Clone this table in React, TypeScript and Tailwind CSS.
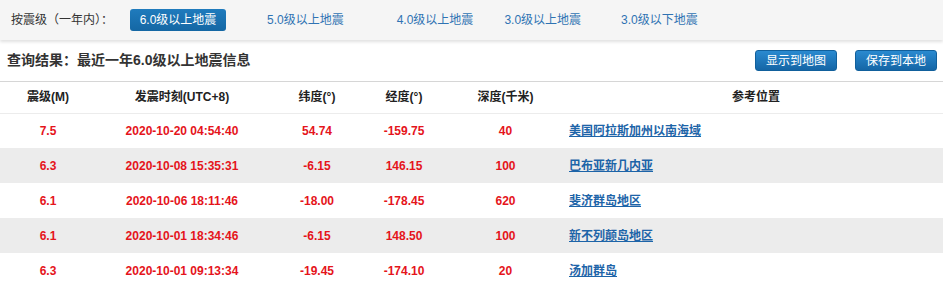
import React from 'react';

interface Quake {
  mag: string;
  time: string;
  lat: string;
  lon: string;
  depth: string;
  place: string;
}

const quakes: Quake[] = [
  { mag: '7.5', time: '2020-10-20 04:54:40', lat: '54.74', lon: '-159.75', depth: '40', place: '美国阿拉斯加州以南海域' },
  { mag: '6.3', time: '2020-10-08 15:35:31', lat: '-6.15', lon: '146.15', depth: '100', place: '巴布亚新几内亚' },
  { mag: '6.1', time: '2020-10-06 18:11:46', lat: '-18.00', lon: '-178.45', depth: '620', place: '斐济群岛地区' },
  { mag: '6.1', time: '2020-10-01 18:34:46', lat: '-6.15', lon: '148.50', depth: '100', place: '新不列颠岛地区' },
  { mag: '6.3', time: '2020-10-01 09:13:34', lat: '-19.45', lon: '-174.10', depth: '20', place: '汤加群岛' },
];

const tabs = [
  { label: '5.0级以上地震', cls: 'ml-[41px]' },
  { label: '4.0级以上地震', cls: 'ml-[53px]' },
  { label: '3.0级以上地震', cls: 'ml-[31px]' },
  { label: '3.0级以下地震', cls: 'ml-[40px]' },
];

function BlueButton({ children }: { children: React.ReactNode }) {
  return (
    <button className="h-[21px] w-[82px] rounded-[3px] border border-[#11609c] bg-gradient-to-b from-[#2a8ad0] to-[#1566a6] text-[12px] leading-none text-white">
      {children}
    </button>
  );
}

export default function App() {
  return (
    <div
      className="h-[287px] w-[943px] overflow-hidden bg-white text-[#333]"
      style={{ fontFamily: '"Liberation Sans", "Noto Sans CJK SC", sans-serif' }}
    >
      {/* magnitude filter */}
      <div className="relative z-10 flex h-[40px] items-center bg-[#f5f5f5] pl-[11px] shadow-[0_2px_3px_rgba(0,0,0,0.12)]">
        <span className="w-[119px] text-[12px]">按震级（一年内）：</span>
        <span className="flex h-[22px] w-[96px] items-center justify-center rounded-[3px] bg-gradient-to-b from-[#1f7bbd] to-[#1467a4] text-[12px] text-white">
          6.0级以上地震
        </span>
        {tabs.map((t) => (
          <span key={t.label} className={`${t.cls} text-[12px] text-[#2f73b3]`}>
            {t.label}
          </span>
        ))}
      </div>

      {/* result heading */}
      <div className="flex h-[42px] items-center justify-between border-b border-[#d6d6d6] pr-[6px] pl-[7px]">
        <span className="text-[14px] font-bold text-[#333]">查询结果：最近一年6.0级以上地震信息</span>
        <div className="flex gap-[18px]">
          <BlueButton>显示到地图</BlueButton>
          <BlueButton>保存到本地</BlueButton>
        </div>
      </div>

      <table className="w-full table-fixed border-collapse text-[12px]">
        <colgroup>
          <col className="w-[96px]" />
          <col className="w-[172px]" />
          <col className="w-[98px]" />
          <col className="w-[76px]" />
          <col className="w-[127px]" />
          <col />
        </colgroup>
        <thead>
          <tr className="h-[31px] border-b border-[#ececec] font-bold text-[#222]">
            <th>震级(M)</th>
            <th>发震时刻(UTC+8)</th>
            <th>纬度(°)</th>
            <th>经度(°)</th>
            <th>深度(千米)</th>
            <th>参考位置</th>
          </tr>
        </thead>
        <tbody>
          {quakes.map((q, i) => (
            <tr key={q.time} className={i % 2 === 1 ? 'h-[35px] bg-[#ececec]' : 'h-[35px] bg-white'}>
              <td className="text-center font-bold text-[#e5141b]">{q.mag}</td>
              <td className="text-center font-bold text-[#e5141b]">{q.time}</td>
              <td className="text-center font-bold text-[#e5141b]">{q.lat}</td>
              <td className="text-center font-bold text-[#e5141b]">{q.lon}</td>
              <td className="text-center font-bold text-[#e5141b]">{q.depth}</td>
              <td className="text-left">
                <a href="#" className="font-bold text-[#1d64a8] underline">
                  {q.place}
                </a>
              </td>
            </tr>
          ))}
        </tbody>
      </table>
    </div>
  );
}
